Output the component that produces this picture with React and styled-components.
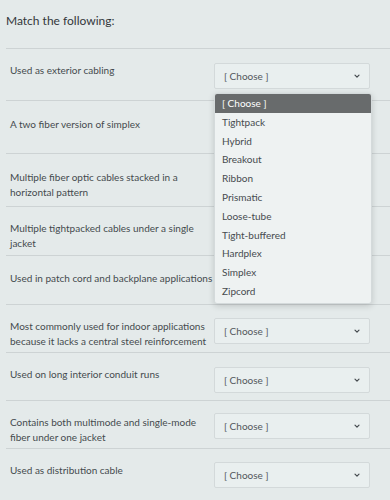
import React from "react";
import styled, { createGlobalStyle } from "styled-components";

const GlobalStyle = createGlobalStyle`
  html, body {
    margin: 0;
    padding: 0;
    background: #e4eaea;
  }
  body {
    font-family: Lato, "Open Sans", sans-serif;
    color: #454a4e;
  }
`;

const Page = styled.div`
  width: 390px;
  height: 500px;
  overflow: hidden;
  padding: 13px 0 0 6px;
  box-sizing: border-box;
`;

const Title = styled.h1`
  margin: 0 0 20px;
  font-size: 12px;
  font-weight: 400;
  color: #33373b;
`;

const Row = styled.div`
  position: relative;
  display: grid;
  grid-template-columns: 1fr 156px;
  column-gap: 6px;
  align-items: start;
  height: ${(p) => p.h}px;
  padding: 14px 20px 0 4px;
  box-sizing: border-box;
  border-top: 1px solid #cdd3d4;
`;

const Prompt = styled.div`
  font-size: 10px;
  line-height: 15px;
  color: #454a4e;
  padding-top: ${(p) => p.offset || 0}px;
  white-space: nowrap;
`;

const Select = styled.div`
  height: 26px;
  box-sizing: border-box;
  display: flex;
  align-items: center;
  justify-content: space-between;
  padding: 0 8px 0 9px;
  background: #e9efef;
  border: 1px solid #d3d9da;
  border-radius: 2px;
  font-size: 10px;
  color: #52575b;
  margin-top: ${(p) => p.offset || 0}px;

  svg {
    width: 8px;
    height: 8px;
  }
`;

const Menu = styled.ul`
  position: absolute;
  z-index: 2;
  right: 18px;
  top: 44px;
  width: 156px;
  margin: 0;
  padding: 0 0 2px;
  list-style: none;
  background: #eef2f2;
  border: 1px solid #d4dadb;
  border-radius: 3px;
  box-shadow: 0 2px 6px rgba(0, 0, 0, 0.16);
  overflow: hidden;
`;

const Option = styled.li`
  height: 18.8px;
  line-height: 19px;
  padding: 0 7px;
  font-size: 10px;
  color: ${(p) => (p.active ? "#ffffff" : "#464b4f")};
  background: ${(p) => (p.active ? "#686b6c" : "transparent")};
`;

const Chevron = () => (
  <svg viewBox="0 0 10 10" fill="none" stroke="#454a4e" strokeWidth="1.5" strokeLinecap="round" strokeLinejoin="round">
    <path d="M2.5 4 5 6.5 7.5 4" />
  </svg>
);

const options = [
  "[ Choose ]",
  "Tightpack",
  "Hybrid",
  "Breakout",
  "Ribbon",
  "Prismatic",
  "Loose-tube",
  "Tight-buffered",
  "Hardplex",
  "Simplex",
  "Zipcord",
];

const rows = [
  { text: ["Used as exterior cabling"], h: 52, select: true, open: true, offset: 0, selOffset: 0 },
  { text: ["A two fiber version of simplex"], h: 53, offset: 2 },
  { text: ["Multiple fiber optic cables stacked in a", "horizontal pattern"], h: 53, offset: 2 },
  { text: ["Multiple tightpacked cables under a single", "jacket"], h: 49, offset: 0 },
  { text: ["Used in patch cord and backplane applications"], h: 49, offset: 1 },
  { text: ["Most commonly used for indoor applications", "because it lacks a central steel reinforcement"], h: 48, select: true, offset: 0, selOffset: -1 },
  { text: ["Used on long interior conduit runs"], h: 48, select: true, offset: 0, selOffset: 0 },
  { text: ["Contains both multimode and single-mode", "fiber under one jacket"], h: 48, select: true, offset: 0, selOffset: -2 },
  { text: ["Used as distribution cable"], h: 52, select: true, offset: 0, selOffset: -1 },
];

const App = () => {
  return (
    <Page>
      <GlobalStyle />
      <Title>Match the following:</Title>
      {rows.map((r, i) => (
        <Row key={i} h={r.h}>
          <Prompt offset={r.offset}>
            {r.text.map((t, j) => (
              <div key={j}>{t}</div>
            ))}
          </Prompt>
          {r.select && (
            <Select offset={r.selOffset}>
              <span>[ Choose ]</span>
              <Chevron />
            </Select>
          )}
          {r.open && (
            <Menu>
              {options.map((o, k) => (
                <Option key={o} active={k === 0}>
                  {o}
                </Option>
              ))}
            </Menu>
          )}
        </Row>
      ))}
    </Page>
  );
};

export default App;
